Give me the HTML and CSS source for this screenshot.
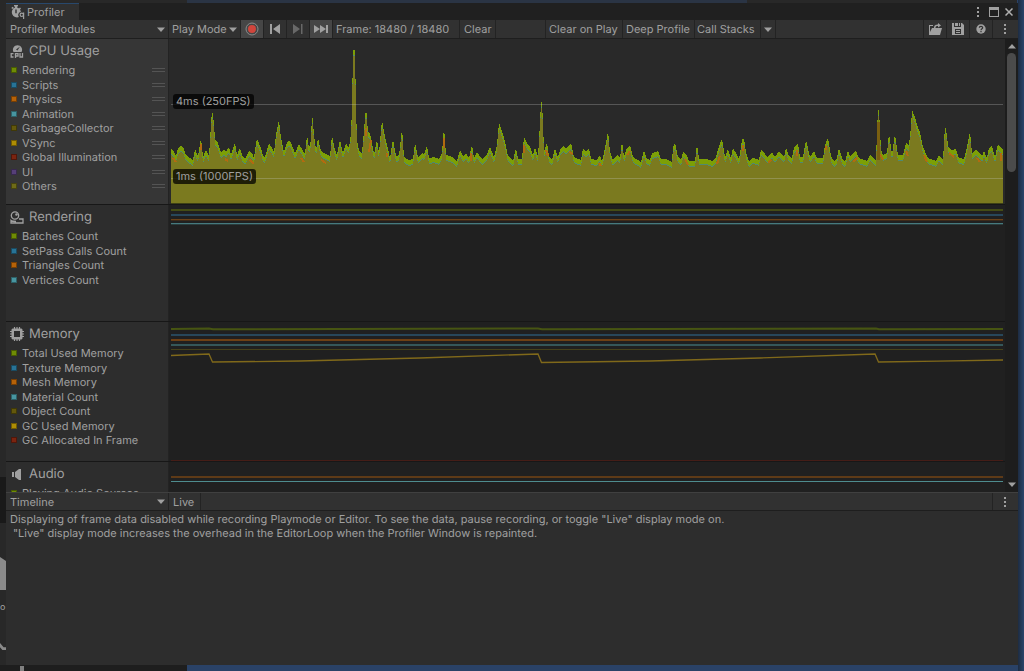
FILE: index.html
```html
<!DOCTYPE html>
<html lang="en">
<head>
<meta charset="utf-8">
<title>Profiler</title>
<link rel="stylesheet" href="styles.css">
</head>
<body>
<svg class="sprite" aria-hidden="true">
  <symbol id="dots" viewBox="0 0 4 12"><path d="M1 1h2v2H1zM1 5h2v2H1zM1 9h2v2H1z"/></symbol>
  <symbol id="caret" viewBox="0 0 8 5"><path d="M0 .5h8L4 5z"/></symbol>
</svg>
<div class="desktop">
  <div class="behind" aria-hidden="true"><span class="behind-thumb"></span><span class="behind-text">o</span><span class="behind-curve"></span></div>
  <main class="window">
    <header class="titlebar">
      <div class="tab">
        <svg class="icon" width="14" height="14" viewBox="0 0 14 14"><path d="M3 0h4v1.500H6V2.500a4.500 4.500 0 0 1 2 .9l1-1 1 1-1 1A5 5 0 0 1 9.800 7 3 3 0 0 0 8 12 4.900 4.900 0 1 1 4 2.500v-1H3zM.3 3l1.300-1.300L2.800 2.800 1.400 4z"/><path d="M5 4.500v3.800" fill="none" stroke="#303030" stroke-width="1.400"/><circle cx="10.800" cy="9.800" r="1.700" fill="none" stroke="#a0a0a0" stroke-width="1.200"/><path d="M12 7.500h1.200V14H12z"/></svg>
        <span>Profiler</span>
      </div>
      <div class="window-buttons">
        <button aria-label="Tab menu"><svg class="icon" width="4" height="12"><use href="#dots"/></svg></button>
        <button aria-label="Maximize"><svg class="icon" width="10" height="10" viewBox="0 0 10 10"><path d="M0 0h10v10H0zM1 3v6h8V3z" fill-rule="evenodd"/></svg></button>
        <button aria-label="Close"><svg class="icon" width="8" height="8" viewBox="0 0 8 8"><path d="M.5.5l7 7M7.500.5l-7 7" fill="none" stroke="#b0b0b0" stroke-width="1.500"/></svg></button>
      </div>
    </header>

    <div class="toolbar">
      <div class="dropdown modules-menu"><select aria-label="Profiler modules"><option>Profiler Modules</option></select><svg class="icon" width="8" height="5"><use href="#caret"/></svg></div>
      <div class="dropdown mode-menu"><select aria-label="Target"><option>Play Mode</option></select><svg class="icon" width="8" height="5"><use href="#caret"/></svg></div>
      <button class="tool on" aria-label="Record"><svg width="14" height="14" viewBox="0 0 14 14"><circle cx="7" cy="7" r="6" fill="none" stroke="#8a8a8a"/><circle cx="7" cy="7" r="4" fill="#d0453c"/></svg></button>
      <button class="tool" aria-label="Previous frame"><svg class="icon" width="10" height="10" viewBox="0 0 10 10"><path d="M0 0h2v10H0zM10 0v10L3 5z"/></svg></button>
      <button class="tool" aria-label="Next frame" disabled><svg class="icon" width="10" height="10" viewBox="0 0 10 10"><path d="M8 0h1.500v10H8zM0 0v10l7-5z"/></svg></button>
      <button class="tool on" aria-label="Current frame"><svg class="icon" width="14" height="8" viewBox="0 0 14 8"><path d="M0 0v8l6-4zM6 0v8l6-4zM12 0h2v8h-2z"/></svg></button>
      <div class="frame">Frame: 18480 / 18480</div>
      <button class="text clear">Clear</button>
      <div class="gap"></div>
      <button class="text on-play">Clear on Play</button>
      <button class="text deep">Deep Profile</button>
      <button class="text stacks">Call Stacks</button>
      <button class="stack-menu" aria-label="Call stack options"><svg class="icon" width="8" height="5"><use href="#caret"/></svg></button>
      <div class="spacer"></div>
      <button class="tool" aria-label="Load"><svg class="icon" width="14" height="13" viewBox="0 0 14 13"><path d="M1 2h4v1H2v6l2-4h10l-2 7H1zM6 5c0-3 2-3.500 4-3.500V0l3 2.500L10 4.500V3C8 3 7.500 3.500 7.500 5z"/></svg></button>
      <button class="tool" aria-label="Save"><svg class="icon" width="12" height="12" viewBox="0 0 12 12"><path fill-rule="evenodd" d="M0 0h2v4h7V0h1l2 2v10H0zM3 6v5h6V6zM3 0h3v3H3zM7 0h1v3H7zM4 7h4v1H4zM4 9h4v1H4z"/></svg></button>
      <button class="tool" aria-label="Help"><svg class="icon" width="10" height="10" viewBox="0 0 10 10"><circle cx="5" cy="5" r="4.700"/><path d="M3.300 3.800C3.300 2 6.700 2 6.700 3.800 6.700 4.800 5 4.800 5 6.200M5 7v1.200" fill="none" stroke="#303030" stroke-width="1.200"/></svg></button>
      <button class="tool" aria-label="More"><svg class="icon" width="4" height="12"><use href="#dots"/></svg></button>
    </div>

    <div class="modules">
      <div class="list">
        <section class="module cpu selected">
          <div class="legend">
            <h2><svg class="icon" width="14" height="14" viewBox="0 0 14 14"><path fill-rule="evenodd" d="M3.500 8a4.600 4.600 0 1 1 8 0zM6 5.500l4-3-2.500 4z"/><path d="M3.500 9.700H1.200v3.300h2.300M5.500 14V9.700H8V12H5.500M10 9v4h2.500V9" fill="none" stroke="#a0a0a0" stroke-width="1.300"/></svg>CPU Usage</h2>
            <ul>
              <li><label><input type="checkbox" class="green" checked>Rendering</label><i></i></li>
              <li><label><input type="checkbox" class="blue" checked>Scripts</label><i></i></li>
              <li><label><input type="checkbox" class="orange" checked>Physics</label><i></i></li>
              <li><label><input type="checkbox" class="cyan" checked>Animation</label><i></i></li>
              <li><label><input type="checkbox" class="brown" checked>GarbageCollector</label><i></i></li>
              <li><label><input type="checkbox" class="yellow" checked>VSync</label><i></i></li>
              <li><label><input type="checkbox" class="red" checked>Global Illumination</label><i></i></li>
              <li><label><input type="checkbox" class="purple" checked>UI</label><i></i></li>
              <li><label><input type="checkbox" class="olive" checked>Others</label><i></i></li>
            </ul>
          </div>
          <div class="chart">
            <svg viewBox="171 39 832 165" preserveAspectRatio="none" shape-rendering="crispEdges">
              <defs><path id="load" d="M171 204V148L174 152 176 156 178 148 181 146 184 149 186 155 190 158 193 160 195 149 198 156 201 138 203 157 206 150 209 156 210 140 212 110 214 123 215 140 218 143 221 153 224 149 226 152 229 147 231 155 235 143 237 155 240 148 243 157 245 159 249 151 252 153 254 158 256 143 257 139 261 148 263 156 265 157 269 143 272 148 274 152 276 135 279 120 281 138 284 152 286 145 289 140 291 143 295 153 299 144 302 149 305 154 307 135 309 148 311 140 312 112 314 135 316 150 318 138 321 151 324 153 330 156 332 135 335 150 337 155 340 140 343 153 346 143 349 148 351 133 352 107 353 50 355 50 356 107 357 140 359 151 362 153 364 130 366 107 368 132 370 133 372 143 374 154 377 140 379 153 382 120 385 137 388 149 390 158 393 139 396 156 399 155 401 138 402 128 404 157 409 160 413 159 415 143 418 157 422 153 424 154 427 146 429 158 434 157 439 159 442 153 444 127 446 155 452 157 457 161 460 150 463 156 466 153 469 158 472 145 474 158 477 152 482 159 486 156 490 147 494 157 497 145 499 123 503 134 505 142 508 156 513 161 516 148 518 159 522 159 524 137 527 143 530 147 533 155 535 147 538 157 540 123 541 102 542 102 543 123 544 151 547 143 549 156 552 160 555 148 558 157 561 148 563 146 566 149 571 143 574 157 581 160 583 148 586 152 589 148 591 159 597 160 600 155 602 161 604 153 606 143 608 131 610 152 613 160 617 155 620 158 622 141 624 157 627 148 630 145 633 157 641 162 644 150 647 159 650 160 652 153 658 151 661 159 666 159 672 162 673 147 675 143 678 157 681 160 683 152 687 155 689 161 695 161 697 144 699 159 706 159 712 161 716 157 719 146 722 139 725 157 728 149 731 158 733 148 736 153 739 159 741 147 742 139 744 139 746 152 749 161 753 158 759 160 761 150 763 151 767 157 772 152 775 157 779 151 784 157 786 148 789 156 792 158 794 148 798 143 800 157 803 157 806 140 810 157 814 151 817 158 823 158 825 145 828 138 831 156 834 161 837 158 839 148 842 158 845 162 848 150 850 156 856 151 859 158 867 161 870 155 876 161 877 130 878 110 879 110 880 130 881 150 883 155 887 153 889 133 892 155 895 134 898 155 903 155 906 143 909 145 911 127 912 110 915 117 917 125 920 132 923 147 928 158 936 161 939 155 943 160 944 143 945 125 947 135 948 147 952 150 956 149 959 158 964 159 967 147 970 131 972 153 976 149 982 156 984 151 987 158 989 148 992 146 995 157 998 144 1003 150V204Z"/></defs>
              <use href="#load" fill="#7c9f06"/>
              <use href="#load" y="5" fill="#4f8a72"/>
              <use href="#load" y="6" fill="#7b7a1f"/>
              <path d="M173 158l3 4M201 144v6M225 159l3 2M250 160l4 4M301 158l3 4M321 160l5 3M366 128v8M371 140l-2 12M387 153v4M444 138v10M471 153v8M524 145v8M546 150l2 6M569 152l4 2M599 163l2 3M627 155l3-4M685 159l3 6M717 164l3-8M743 145v6M768 163l3-3M797 150v6M826 150v-4M853 162l4-4M880 154l3 6M906 151l2 5M924 155l3 7M949 153l5 4M977 158l3 4M1001 153v8" fill="none" stroke="#b26a10" stroke-width="2"/>
              <path d="M878.500 122v38" stroke="#7a5f10" stroke-width="3"/>
              <path d="M171 104.500h832M171 178.500h832" stroke="#ccc" stroke-opacity=".28"/>
              <path d="M171 203.500h832" stroke="#3d4016"/>
            </svg>
            <span class="marker marker-4ms">4ms (250FPS)</span>
            <span class="marker marker-1ms">1ms (1000FPS)</span>
          </div>
        </section>

        <section class="module rendering">
          <div class="legend">
            <h2><svg class="icon" width="14" height="13" viewBox="0 0 14 13"><circle cx="5" cy="4.500" r="3.700" fill="none" stroke="#a0a0a0" stroke-width="1.300"/><circle cx="6.500" cy="3.500" r="1.300"/><path d="M9 8h4v4H1V9.500c1 1 4 1 5 1" fill="none" stroke="#a0a0a0" stroke-width="1.300"/></svg>Rendering</h2>
            <ul>
              <li><label><input type="checkbox" class="green" checked>Batches Count</label></li>
              <li><label><input type="checkbox" class="blue" checked>SetPass Calls Count</label></li>
              <li><label><input type="checkbox" class="orange" checked>Triangles Count</label></li>
              <li><label><input type="checkbox" class="cyan" checked>Vertices Count</label></li>
            </ul>
          </div>
          <div class="chart">
            <svg viewBox="171 205 832 116" preserveAspectRatio="none" fill="none" stroke-width="2">
              <path d="M171 210h832" stroke="#434c15"/><path d="M171 215h832" stroke="#28475a"/><path d="M171 219.500h832" stroke="#6a4219" stroke-width="1"/><path d="M171 220.500h832" stroke="#3a291a" stroke-width="1"/><path d="M171 223.500h832" stroke="#467a7e" stroke-width="1"/><path d="M171 224.500h832" stroke="#2a3c3d" stroke-width="1"/>
            </svg>
          </div>
        </section>

        <section class="module memory">
          <div class="legend">
            <h2><svg class="icon" width="14" height="14" viewBox="0 0 14 14"><path fill-rule="evenodd" d="M2.500 1.500h9l1 1v9l-1 1h-9l-1-1v-9zM4 4v6h6V4z"/><path d="M4.500 0v2M7 0v2M9.500 0v2M4.500 12v2M7 12v2M9.500 12v2M0 4.500h2M0 7h2M0 9.500h2M12 4.500h2M12 7h2M12 9.500h2" stroke="#a0a0a0" stroke-width="1.200"/></svg>Memory</h2>
            <ul>
              <li><label><input type="checkbox" class="green" checked>Total Used Memory</label></li>
              <li><label><input type="checkbox" class="blue" checked>Texture Memory</label></li>
              <li><label><input type="checkbox" class="orange" checked>Mesh Memory</label></li>
              <li><label><input type="checkbox" class="cyan" checked>Material Count</label></li>
              <li><label><input type="checkbox" class="brown" checked>Object Count</label></li>
              <li><label><input type="checkbox" class="yellow" checked>GC Used Memory</label></li>
              <li><label><input type="checkbox" class="red" checked>GC Allocated In Frame</label></li>
            </ul>
          </div>
          <div class="chart">
            <svg viewBox="171 322 832 139" preserveAspectRatio="none" fill="none" stroke-width="2">
              <path d="M171 329l38-.5 4 .8 325-.8 4 .8 334-.8 3 .8 124-.3" stroke="#475512" stroke-width="2"/><path d="M171 335h832" stroke="#28475a"/><path d="M171 340h832" stroke="#6e4014"/><path d="M171 345h832" stroke="#355759"/><path d="M171 349.500h832" stroke="#46411a" stroke-width="1"/>
              <path d="M171 355.500l38-1.500 3.500 8L300 361l120-3 118-4 3.500 8.500L650 361l110-3 115-4 3.500 8 60-.8 65-1.200" stroke="#80691a" stroke-width="1.300"/>
              <path d="M171 460.500h832" stroke="#451d17" stroke-width="1"/>
            </svg>
          </div>
        </section>

        <section class="module audio">
          <div class="legend">
            <h2><svg class="icon" width="14" height="13" viewBox="0 0 14 13"><path d="M2 4h2v5H2zM5 4l4-3h2v11H9L5 9z"/></svg>Audio</h2>
            <ul>
              <li><label><input type="checkbox" class="green" checked>Playing Audio Sources</label></li>
            </ul>
          </div>
          <div class="chart">
            <svg viewBox="171 462 832 139" preserveAspectRatio="none" fill="none"><path d="M171 477h832" stroke="#5e3a17" stroke-width="2"/><path d="M171 481.500h832" stroke="#4e8c8e"/></svg>
          </div>
        </section>
      </div>
      <div class="scrollbar">
        <svg class="icon" width="8" height="5" viewBox="0 0 8 5"><path d="M4 0l4 4.500H0z"/></svg>
        <div class="track"><div class="thumb"></div></div>
        <svg class="icon" width="8" height="5"><use href="#caret"/></svg>
      </div>
    </div>

    <div class="toolbar lower">
      <div class="dropdown modules-menu"><select aria-label="View"><option>Timeline</option></select><svg class="icon" width="8" height="5"><use href="#caret"/></svg></div>
      <button class="text live">Live</button>
      <div class="spacer"></div>
      <button class="tool" aria-label="View options"><svg class="icon" width="4" height="12"><use href="#dots"/></svg></button>
    </div>
    <div class="details">
      <p>Displaying of frame data disabled while recording Playmode or Editor. To see the data, pause recording, or toggle "Live" display mode on.</p>
      <p class="indent">"Live" display mode increases the overhead in the EditorLoop when the Profiler Window is repainted.</p>
    </div>
  </main>
</div>
</body>
</html>
```

FILE: styles.css
```css
* { box-sizing: border-box; }
html, body { height: 100%; }
body { margin: 0; overflow: hidden; font: 11px/14px Inter, "Liberation Sans", sans-serif; color: #a0a0a0; text-rendering: geometricPrecision; }
h2, p, ul { margin: 0; padding: 0; }
ul { list-style: none; }
button, select { font: inherit; color: inherit; text-rendering: inherit; border: 0; margin: 0; padding: 0; background: none; border-radius: 0; }
.sprite { position: absolute; width: 0; height: 0; }
.icon { fill: #a0a0a0; flex: none; }

.desktop {
  height: 100vh; padding: 3px 6px 6px 0; display: grid; grid-template-columns: 6px minmax(0, 1fr);
  background:
    linear-gradient(#808080, #808080) 20px 100% / 4px 5px no-repeat,
    linear-gradient(#1e1e1e, #1e1e1e) 0 100% / 187px 6px no-repeat,
    linear-gradient(#282828, #282828) 0 0 / 187px 3px no-repeat,
    linear-gradient(90deg, #2a3444 560px, #282828 560px) 187px 0 / calc(100% - 194px) 3px no-repeat,
    linear-gradient(90deg, #1d2c42, #2a446a) 100% 0 / 6px 100% no-repeat,
    #2a4267;
}
.behind { background: linear-gradient(#282828 474px, #191919 474px 520px, #282828 520px); overflow: hidden; display: flex; flex-direction: column; padding-top: 554px; }
.behind-thumb { height: 33px; background: #8a8a8a; clip-path: polygon(0 0, 100% 12%, 100% 100%, 0 100%); }
.behind-text { font-size: 9px; margin-top: 11px; }
.behind-curve { height: 7px; margin-top: 28px; background: #8a8a8a; clip-path: polygon(0 0, 60% 60%, 100% 60%, 100% 100%, 40% 100%, 0 60%); }

.window { min-width: 0; min-height: 0; display: grid; grid-template-rows: 17px 19px minmax(0, 453fr) 19px minmax(0, 154fr); background: #2d2d2d; }

.titlebar { display: flex; justify-content: space-between; background: #202020; }
.tab { width: 73px; display: flex; align-items: center; gap: 2px; padding-left: 5px; background: #303030; border-top: 1px solid #28486c; }
.window-buttons { display: flex; align-items: center; padding-right: 5px; gap: 9px; }
.window-buttons button { display: flex; }
.window-buttons button:last-child { margin-left: -3px; }

.toolbar { display: flex; background: #313131; border-bottom: 1px solid #1e1e1e; white-space: nowrap; }
.toolbar > * { border-right: 1px solid #232323; flex: none; }
.toolbar > .spacer { flex: 1; }
.toolbar > .tool:last-child { width: 25px; padding-right: 2px; border-right: 0; }
.dropdown { position: relative; }
.dropdown select { appearance: none; width: 100%; height: 100%; padding-left: 4px; }
.dropdown .icon { position: absolute; right: 3px; top: 7px; pointer-events: none; }
.modules-menu { width: 163px; }
.mode-menu { width: 72px; }
.mode-menu select { padding-left: 3px; }
.tool { width: 23px; display: flex; align-items: center; justify-content: center; }
.tool.on { background: #464646; }
.tool:disabled .icon { fill: #686868; }
.frame { width: 127px; padding: 2px 0 0 3px; }
.text { padding: 0 4px; text-align: left; }
.clear { width: 36px; }
.gap { width: 50px; }
.on-play { width: 77px; }
.on-play, .deep { padding: 0 3px; }
.deep { width: 72px; }
.toolbar > .stacks { width: 65px; padding: 0 2px; border-right: 0; }
.stack-menu { width: 16px; display: flex; align-items: center; justify-content: center; border-left: 1px solid #232323; }
.lower { border-top: 1px solid #404040; }
.lower .dropdown .icon { top: 6px; }
.live { width: 32px; }

.modules { display: grid; grid-template-columns: minmax(0, 1fr) 13px; min-height: 0; background: #202020; }
.list { overflow: hidden; min-height: 0; }
.module { display: grid; grid-template-columns: 162px minmax(0, 1fr); border-bottom: 1px solid #171717; }
.cpu { height: 166px; }
.rendering { height: 117px; }
.memory { height: 140px; }
.audio { height: 140px; }
.legend { background: #2d2d2d; padding: 0 3px 0 4px; }
.selected .legend { background: #363636; }
.selected .chart { background: #292929; }
h2 { display: flex; align-items: center; gap: 5px; height: 24px; font-size: 13px; font-weight: 400; }
li { display: flex; justify-content: space-between; align-items: center; height: 14px; }
li:nth-child(even) { height: 15px; }
label { display: flex; align-items: center; gap: 5px; padding-left: 1px; }
input { appearance: none; width: 6px; height: 6px; margin: 0; border: 1px solid rgb(0 0 0 / 35%); }
li i { width: 13px; height: 4px; border: solid #545454; border-width: 1px 0; }
.green { background: #6f8c05; }
.blue { background: #287396; }
.orange { background: #b66208; }
.cyan { background: #4895a0; }
.brown { background: #63580c; }
.yellow { background: #ae8d05; }
.red { background: #7b2410; }
.purple { background: #563f78; }
.olive { background: #6e6b18; }

.chart { position: relative; padding: 0 2px; border-left: 1px solid #232323; min-height: 0; }
.chart svg { display: block; width: 100%; height: 100%; }
.marker { position: absolute; left: 4px; padding: 0 3px; border-radius: 3px; background: rgb(0 0 0 / 75%); line-height: 15px; }
.marker-4ms { top: 55px; }
.marker-1ms { top: 130px; }

.scrollbar { display: flex; flex-direction: column; align-items: center; padding: 5px 0; gap: 4px; background: #1d1d1d; }
.track { flex: 1; width: 9px; }
.thumb { height: 28%; border-radius: 5px; background: #4b4b4b; }

.details { padding: 1px 4px; line-height: 14px; }
.indent { padding-left: 3px; }
```
